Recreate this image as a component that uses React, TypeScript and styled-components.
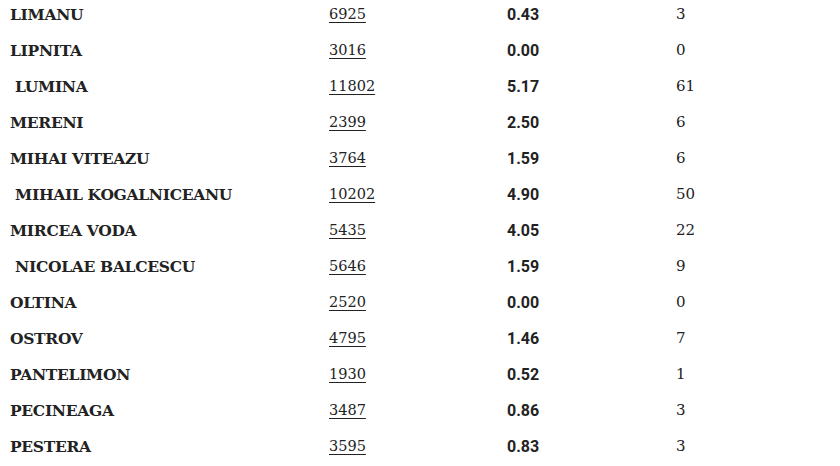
import React from "react";
import styled, { createGlobalStyle } from "styled-components";

const GlobalStyle = createGlobalStyle`
  body {
    margin: 0;
    background: #fff;
    font-family: "DejaVu Serif", "Liberation Serif", serif;
    color: #222;
  }
`;

const Table = styled.div`
  display: grid;
  grid-template-columns: 319px 178px 169px 1fr;
  grid-auto-rows: 36px;
  padding-left: 10px;
  margin-top: -4px;
`;

const Name = styled.div`
  display: flex;
  align-items: center;
  white-space: pre;
  font-family: "DejaVu Serif", serif;
  font-size: 15.5px;
  font-weight: 700;
  letter-spacing: -0.3px;
`;

const Cell = styled.div<{ $bold?: boolean }>`
  display: flex;
  align-items: center;
  font-size: ${(p) => (p.$bold ? "16px" : "15px")};
  font-weight: ${(p) => (p.$bold ? 700 : 400)};
  font-family: ${(p) =>
    p.$bold ? `Roboto, "Liberation Sans", sans-serif` : `"DejaVu Serif", serif`};
`;

const Pop = styled.a`
  color: #222;
  text-decoration: underline;
  text-underline-offset: 3px;
  font-size: 14.5px;
`;

const rows: [string, string, string, string][] = [
  ["LIMANU", "6925", "0.43", "3"],
  ["LIPNITA", "3016", "0.00", "0"],
  [" LUMINA", "11802", "5.17", "61"],
  ["MERENI", "2399", "2.50", "6"],
  ["MIHAI VITEAZU", "3764", "1.59", "6"],
  [" MIHAIL KOGALNICEANU", "10202", "4.90", "50"],
  ["MIRCEA VODA", "5435", "4.05", "22"],
  [" NICOLAE BALCESCU", "5646", "1.59", "9"],
  ["OLTINA", "2520", "0.00", "0"],
  ["OSTROV", "4795", "1.46", "7"],
  ["PANTELIMON", "1930", "0.52", "1"],
  ["PECINEAGA", "3487", "0.86", "3"],
  ["PESTERA", "3595", "0.83", "3"],
];

export default function App() {
  return (
    <>
      <GlobalStyle />
      <Table>
        {rows.map(([name, pop, rate, cases]) => (
          <React.Fragment key={name}>
            <Name>{name}</Name>
            <Cell>
              <Pop href="#">{pop}</Pop>
            </Cell>
            <Cell $bold>{rate}</Cell>
            <Cell>{cases}</Cell>
          </React.Fragment>
        ))}
      </Table>
    </>
  );
}
